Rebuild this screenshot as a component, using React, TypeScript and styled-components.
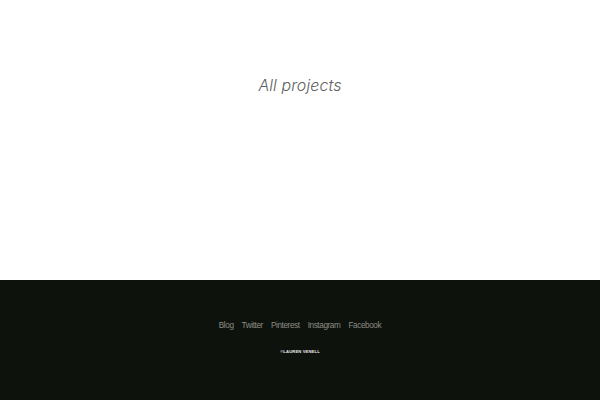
import React from "react";
import styled, { createGlobalStyle } from "styled-components";

const Global = createGlobalStyle`
  html, body { margin: 0; padding: 0; background: #fff; }
  #root { min-height: 400px; }
`;

const Page = styled.div`
  display: flex;
  flex-direction: column;
  width: 600px;
  height: 400px;
`;

const Main = styled.main`
  height: 280px;
  display: flex;
  justify-content: center;
  align-items: flex-start;
  padding-top: 75px;
  box-sizing: border-box;
`;

const Title = styled.h1`
  margin: 0;
  font-family: "Inter", "Liberation Sans", sans-serif;
  font-style: italic;
  font-weight: 300;
  font-size: 16px;
  color: #606060;
  letter-spacing: 0.1px;
`;

const Footer = styled.footer`
  flex: 1;
  background: #0e120c;
  display: flex;
  flex-direction: column;
  align-items: center;
  padding-top: 41px;
  box-sizing: border-box;
  gap: 19px;
`;

const Links = styled.nav`
  display: flex;
  gap: 8px;
`;

const Link = styled.a`
  font-family: "Liberation Sans", sans-serif;
  font-weight: 300;
  font-size: 8.2px;
  letter-spacing: -0.4px;
  color: #8a8c85;
  text-decoration: none;
`;

const Copy = styled.div`
  font-family: "Liberation Sans", sans-serif;
  font-weight: 700;
  font-size: 4.2px;
  color: #e8e8e8;
  letter-spacing: 0.1px;
`;

export default function App() {
  return (
    <Page>
      <Global />
      <Main>
        <Title>All projects</Title>
      </Main>
      <Footer>
        <Links>
          {["Blog", "Twitter", "Pinterest", "Instagram", "Facebook"].map((l) => (
            <Link key={l} href="#">{l}</Link>
          ))}
        </Links>
        <Copy>©LAUREN VENELL</Copy>
      </Footer>
    </Page>
  );
}
